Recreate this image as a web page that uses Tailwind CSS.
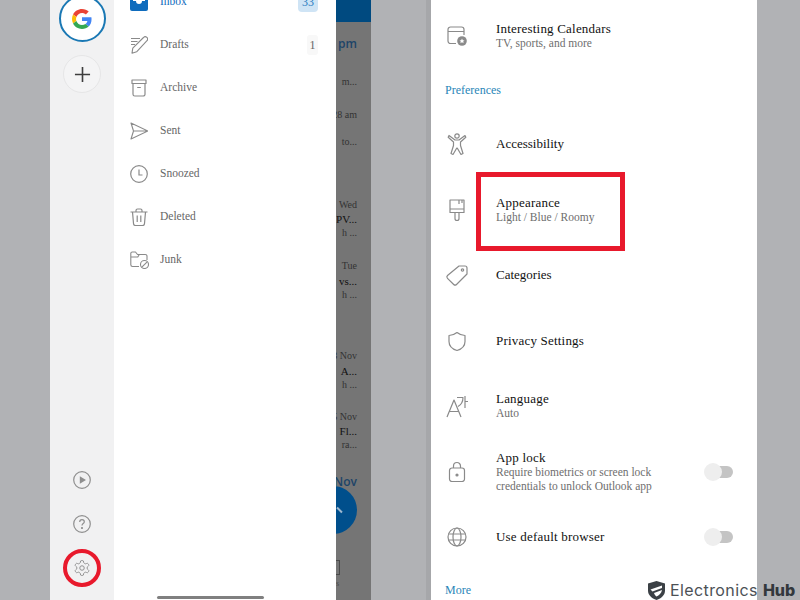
<!DOCTYPE html>
<html lang="en">
<head>
  <meta charset="UTF-8" />
  <meta name="viewport" content="width=device-width, initial-scale=1.0"/>
  <title>Outlook settings</title>
  <script src="https://cdn.jsdelivr.net/npm/@tailwindcss/browser@4"></script>
</head>
<body class="bg-[#b1b2b5] font-['Liberation_Serif',serif] overflow-hidden">
<div class="relative flex w-[800px] h-[600px] overflow-hidden">

  <!-- Left phone -->
  <div class="ml-[50px] flex w-[321px] h-[600px]">

    <!-- Account rail -->
    <div class="w-[64px] h-full bg-[#f1f1f2] flex flex-col items-center justify-between">
      <div class="flex flex-col items-center gap-[13px] -mt-[5px]">
        <div class="w-[47px] h-[47px] rounded-full border-2 border-[#1a78b4] bg-white flex items-center justify-center">
          <svg width="20" height="20" viewBox="0 0 48 48">
            <path fill="#EA4335" d="M24 9.500c3.500 0 6.700 1.200 9.200 3.600l6.900-6.900C35.900 2.400 30.500 0 24 0 14.600 0 6.500 5.400 2.600 13.200l8 6.200C12.500 13.600 17.800 9.500 24 9.500z"/>
            <path fill="#4285F4" d="M46.900 24.500c0-1.600-.1-3.100-.4-4.500H24v9h12.900c-.6 3-2.300 5.500-4.800 7.200l7.700 6c4.500-4.200 7.100-10.300 7.100-17.700z"/>
            <path fill="#FBBC05" d="M10.500 28.600c-.5-1.400-.8-3-.8-4.600s.3-3.200.8-4.600l-8-6.200C.9 16.400 0 20.100 0 24s.9 7.600 2.600 10.800l7.900-6.200z"/>
            <path fill="#34A853" d="M24 48c6.500 0 11.900-2.100 15.900-5.800l-7.700-6c-2.200 1.400-4.900 2.300-8.200 2.300-6.200 0-11.500-4.200-13.400-9.800l-8 6.200C6.500 42.600 14.600 48 24 48z"/>
          </svg>
        </div>
        <div class="w-[38px] h-[38px] rounded-full bg-[#f4f4f5] border border-[#e6e6e7] flex items-center justify-center">
          <svg width="17" height="17" viewBox="0 0 18 18" fill="none" stroke="#3d3d3d" stroke-width="1.700"><path d="M9 1v16M1 9h16"/></svg>
        </div>
      </div>
      <div class="flex flex-col items-center gap-[26px] pb-[23px]">
        <svg width="18" height="18" viewBox="0 0 18 18" fill="none" stroke="#8f8f8f" stroke-width="1.200"><circle cx="9" cy="9" r="8.300"/><path d="M6.800 5.200v7.600L13 9z" fill="#8f8f8f" stroke="none"/></svg>
        <svg width="18" height="18" viewBox="0 0 18 18" fill="none" stroke="#8f8f8f" stroke-width="1.200"><circle cx="9" cy="9" r="8.300"/><path d="M6.700 7c0-1.500 1-2.400 2.300-2.400s2.300.9 2.300 2.100c0 1.800-2.300 1.800-2.300 3.700"/><circle cx="9" cy="13" r=".5" fill="#8f8f8f"/></svg>
        <div class="relative flex items-center justify-center w-[18px] h-[18px]">
          <svg width="20" height="20" viewBox="0 0 24 24" fill="none" stroke="#8f8f8f" stroke-width="1.300" stroke-linejoin="round"><path d="M12.220 2h-.44a2 2 0 0 0-2 2v.18a2 2 0 0 1-1 1.730l-.43.250a2 2 0 0 1-2 0l-.15-.08a2 2 0 0 0-2.730.730l-.22.380a2 2 0 0 0 .73 2.730l.15.100a2 2 0 0 1 1 1.720v.510a2 2 0 0 1-1 1.740l-.15.090a2 2 0 0 0-.73 2.730l.22.380a2 2 0 0 0 2.730.730l.15-.08a2 2 0 0 1 2 0l.43.250a2 2 0 0 1 1 1.730V20a2 2 0 0 0 2 2h.44a2 2 0 0 0 2-2v-.18a2 2 0 0 1 1-1.730l.43-.25a2 2 0 0 1 2 0l.15.080a2 2 0 0 0 2.730-.73l.22-.39a2 2 0 0 0-.73-2.730l-.15-.08a2 2 0 0 1-1-1.740v-.5a2 2 0 0 1 1-1.740l.15-.09a2 2 0 0 0 .73-2.730l-.22-.38a2 2 0 0 0-2.730-.73l-.15.080a2 2 0 0 1-2 0l-.43-.25a2 2 0 0 1-1-1.730V4a2 2 0 0 0-2-2z"/><circle cx="12" cy="12" r="3"/></svg>
          <div class="absolute -left-[10px] -top-[10px] w-[38px] h-[38px] rounded-full border-4 border-[#e8192c]"></div>
        </div>
      </div>
    </div>

    <!-- Folder drawer -->
    <div class="relative z-10 w-[222px] h-full bg-white">
      <div class="-mt-[20px] text-[11.500px] text-[#666]">
        <div class="h-[43px] flex items-center pl-[16px] pr-[18px]">
          <svg class="mr-[12px]" width="18" height="18" viewBox="0 0 18 18"><path d="M2 1h14a2 2 0 0 1 2 2v13a2 2 0 0 1-2 2H2a2 2 0 0 1-2-2V3a2 2 0 0 1 2-2z" fill="#0f6cbd"/><path d="M3 3h12v5h-3a3 3 0 0 1-6 0H3z" fill="#fff"/></svg>
          <span class="text-[#0f6cbd]">Inbox</span>
          <span class="ml-auto w-[20px] h-[20px] rounded-[4px] bg-[#cfe4f5] text-[#2a7cc0] flex items-center justify-center text-[12px]">33</span>
        </div>
        <div class="h-[43px] flex items-center pl-[16px] pr-[18px]">
          <svg class="mr-[12px]" width="18" height="18" viewBox="0 0 18 18" fill="none" stroke="#8a8a8a" stroke-width="1.100" stroke-linejoin="round"><path d="M1 2.500h9M1 5.500h6.500M1 8.500h4M2 17.200l.8-5L13.500 1.500a1.700 1.700 0 0 1 3.500 3.200L6.600 15.800z"/></svg>
          <span>Drafts</span>
          <span class="ml-auto w-[11px] h-[20px] rounded-[3px] bg-[#f8f8f8] flex items-center justify-center text-[12px]">1</span>
        </div>
        <div class="h-[43px] flex items-center pl-[16px] pr-[18px]">
          <svg class="mr-[12px]" width="18" height="18" viewBox="0 0 18 18" fill="none" stroke="#8a8a8a" stroke-width="1.200" stroke-linejoin="round"><path d="M2 1h14v3.500H2zM3 4.500v10.700A1.800 1.800 0 0 0 4.800 17h8.400a1.800 1.800 0 0 0 1.800-1.800V4.500M7.200 8.500h3.600"/></svg>
          <span>Archive</span>
        </div>
        <div class="h-[43px] flex items-center pl-[16px] pr-[18px]">
          <svg class="mr-[12px]" width="18" height="18" viewBox="0 0 18 18" fill="none" stroke="#8a8a8a" stroke-width="1.100" stroke-linejoin="round"><path d="M1 1l17 8L1 17l2.500-8zM3.500 9H18"/></svg>
          <span>Sent</span>
        </div>
        <div class="h-[43px] flex items-center pl-[16px] pr-[18px]">
          <svg class="mr-[12px]" width="18" height="18" viewBox="0 0 18 18" fill="none" stroke="#8a8a8a" stroke-width="1.200"><circle cx="9" cy="9" r="8.300"/><path d="M9 4.500V10h3.500"/></svg>
          <span>Snoozed</span>
        </div>
        <div class="h-[43px] flex items-center pl-[16px] pr-[18px]">
          <svg class="mr-[12px]" width="18" height="18" viewBox="0 0 18 18" fill="none" stroke="#8a8a8a" stroke-width="1.200" stroke-linejoin="round"><path d="M.5 4h17M6 4V2.500A1.500 1.500 0 0 1 7.500 1h3A1.500 1.500 0 0 1 12 2.500V4M2.500 4l1 11.500A2 2 0 0 0 5.500 17.500h7a2 2 0 0 0 2-2L15.500 4M7.200 7.500v6.500M10.800 7.500v6.500"/></svg>
          <span>Deleted</span>
        </div>
        <div class="h-[43px] flex items-center pl-[16px] pr-[18px]">
          <svg class="mr-[12px]" width="19" height="18" viewBox="0 0 19 18" fill="none" stroke="#8a8a8a" stroke-width="1.100" stroke-linejoin="round"><path d="M9 15.500H2.500A1.700 1.700 0 0 1 .8 13.800V2.500A1.500 1.500 0 0 1 2.300 1h3.200l2 2.500h7.800A1.700 1.700 0 0 1 17 5.200V9M.8 6h7l1.500-2.500"/><circle cx="14.500" cy="13.500" r="4"/><path d="M11.800 16.200l5.400-5.400"/></svg>
          <span class="-ml-px">Junk</span>
        </div>
      </div>
      <div class="absolute left-[43px] bottom-[1px] w-[107px] h-[3px] rounded-full bg-[#808080]"></div>
    </div>

    <!-- Dimmed mail list behind the drawer -->
    <div class="relative w-[35px] h-full bg-[#757575] overflow-hidden">
      <div class="h-[22px] bg-[#004a80]"></div>
      <div class="flex flex-col items-end pr-[14px] text-[10px] leading-[14px] text-[#333] whitespace-nowrap">
        <div class="mt-[15px] h-[14px] font-['Open_Sans',sans-serif] text-[12px] font-semibold text-[#1d4468]">pm</div>
        <div class="mt-[24px] h-[14px]">m...</div>
        <div class="mt-[19px] h-[14px]">28 am</div>
        <div class="mt-[13px] h-[14px]">to...</div>
        <div class="mt-[49px] h-[14px]">Wed</div>
        <div class="h-[14px] text-[11px] text-[#111]">PV...</div>
        <div class="h-[14px]">h ...</div>
        <div class="mt-[19px] h-[14px]">Tue</div>
        <div class="mt-px h-[14px] text-[11px] text-[#111]">vs...</div>
        <div class="h-[14px]">h ...</div>
        <div class="mt-[47px] h-[14px]">3 Nov</div>
        <div class="mt-px h-[14px] text-[11px] text-[#111]">A...</div>
        <div class="h-[14px]">h ...</div>
        <div class="mt-[18px] h-[14px]">5 Nov</div>
        <div class="h-[14px] text-[11px] text-[#111]">Fl...</div>
        <div class="h-[14px]">ra...</div>
        <div class="mt-[23px] h-[14px] font-['Open_Sans',sans-serif] text-[12px] font-semibold text-[#1d4468]">Nov</div>
      </div>
      <div class="absolute left-[-27px] top-[486px] w-[48px] h-[48px] rounded-full bg-[#004f8c]"></div>
      <div class="absolute left-0 top-[509px] w-[7px] h-[2px] rotate-45 bg-[#9db8cf]"></div>
      <div class="absolute left-0 top-[560px] w-[4px] h-[15px] border border-l-0 border-[#4a4a4a]"></div>
      <div class="absolute left-0 top-[579px] text-[8px] leading-[10px] text-[#4a4a4a]">s</div>
    </div>
  </div>

  <!-- Right phone: settings list -->
  <div class="ml-[55px] w-[5px] h-full bg-[#a6a7aa]"></div>
  <div class="w-[326px] h-[600px] bg-white text-[13px] leading-[14px] text-[#111]">
    <div class="mt-[3.500px] h-[65px] flex items-center pl-[14px]">
      <svg class="mr-[27px]" width="24" height="24" viewBox="0 0 24 24" fill="none" stroke="#8a8a8a" stroke-width="1.200"><path d="M11 19.500H5.500A2.500 2.500 0 0 1 3 17V5.500A2.500 2.500 0 0 1 5.500 3h11A2.500 2.500 0 0 1 19 5.500V11M3 7.500h16"/><circle cx="17" cy="17" r="4.800" fill="#8a8a8a" stroke="none"/><path d="M17 14.500l.8 1.700 1.700.2-1.300 1.100.4 1.700-1.600-.9-1.600.9.4-1.700-1.300-1.100 1.700-.2z" fill="#fff" stroke="none"/></svg>
      <div>
        <div class="tracking-[0.2px]">Interesting Calendars</div>
        <div class="text-[11.500px] text-[#6e6e6e]">TV, sports, and more</div>
      </div>
    </div>
    <div class="h-[43px] flex items-center pl-[14px] text-[12px] text-[#2a86b8]">Preferences</div>
    <div class="h-[65.500px] flex items-center pl-[14px]">
      <svg class="mr-[27px]" width="24" height="24" viewBox="0 0 24 24" fill="none" stroke="#8a8a8a" stroke-width="1.200" stroke-linejoin="round"><circle cx="12" cy="4" r="2.200"/><path d="M4 3.500l-.8 1.700L8.500 10v3.500L6 21.500l2 1 3.800-6.500h.4l3.800 6.500 2-1-2.500-8V10l5.300-4.800-.8-1.700L14 8h-4z"/></svg>
      <div>Accessibility</div>
    </div>
    <div class="h-[65.500px] flex items-center pl-[14px]">
      <svg class="mr-[27px]" width="24" height="24" viewBox="0 0 24 24" fill="none" stroke="#8a8a8a" stroke-width="1.200" stroke-linejoin="round"><path d="M5 2h14v12.500H5zM5 11h14M14 2v4M17 2v3M10 14.500v6a2 2 0 0 0 4 0v-6"/></svg>
      <div>
        <div class="tracking-[0.2px]">Appearance</div>
        <div class="text-[11.500px] text-[#6e6e6e]">Light / Blue / Roomy</div>
      </div>
    </div>
    <div class="h-[65.500px] flex items-center pl-[14px]">
      <svg class="mr-[27px]" width="24" height="24" viewBox="0 0 24 24" fill="none" stroke="#8a8a8a" stroke-width="1.200" stroke-linejoin="round"><path d="M14 3h6a2 2 0 0 1 2 2v6L11.500 21.500a2 2 0 0 1-2.800 0l-6.200-6.200a2 2 0 0 1 0-2.800z"/><circle cx="17.500" cy="7" r="1.200"/></svg>
      <div>Categories</div>
    </div>
    <div class="h-[65.500px] flex items-center pl-[14px]">
      <svg class="mr-[27px]" width="24" height="24" viewBox="0 0 24 24" fill="none" stroke="#8a8a8a" stroke-width="1.200" stroke-linejoin="round"><path d="M12 3.500c2.500 2 5 3 8 3v6c0 4.500-3 7.500-8 9-5-1.500-8-4.500-8-9v-6c3 0 5.500-1 8-3z"/></svg>
      <div class="tracking-[0.2px]">Privacy Settings</div>
    </div>
    <div class="h-[65.500px] flex items-center pl-[14px]">
      <svg class="mr-[27px]" width="24" height="24" viewBox="0 0 24 24" fill="none" stroke="#8a8a8a" stroke-width="1.200" stroke-linejoin="round"><path d="M2 23L9 6l7 17M4.500 17.500h9M12 3.500h6c0 4-1.500 7-5 9M20 2v12M20 7.500h3"/></svg>
      <div>
        <div class="tracking-[0.2px]">Language</div>
        <div class="text-[11.500px] text-[#6e6e6e]">Auto</div>
      </div>
    </div>
    <div class="h-[65.500px] flex items-center pl-[14px] pr-[24px]">
      <svg class="mr-[27px]" width="24" height="24" viewBox="0 0 24 24" fill="none" stroke="#8a8a8a" stroke-width="1.200" stroke-linejoin="round"><path d="M7 8h10a2.500 2.500 0 0 1 2.500 2.500v8.500a2.500 2.500 0 0 1-2.500 2.500H7A2.500 2.500 0 0 1 4.500 19v-8.500A2.500 2.500 0 0 1 7 8zM8.500 8V6a3.500 3.500 0 0 1 7 0v2"/><circle cx="12" cy="15" r="1" fill="#8a8a8a"/></svg>
      <div>
        <div class="tracking-[0.2px]">App lock</div>
        <div class="text-[11.500px] text-[#6e6e6e]">Require biometrics or screen lock</div>
        <div class="text-[11.500px] text-[#6e6e6e]">credentials to unlock Outlook app</div>
      </div>
      <div class="relative ml-auto w-[25px] h-[12px] rounded-full bg-[#c4c4c4]">
        <div class="absolute -left-[4px] -top-[3px] w-[18px] h-[18px] rounded-full bg-[#eeeeee]"></div>
      </div>
    </div>
    <div class="h-[65.500px] flex items-center pl-[14px] pr-[24px]">
      <svg class="mr-[27px]" width="24" height="24" viewBox="0 0 24 24" fill="none" stroke="#8a8a8a" stroke-width="1.200"><circle cx="12" cy="12" r="9"/><ellipse cx="12" cy="12" rx="4" ry="9"/><path d="M3.500 9h17M3.500 15h17"/></svg>
      <div class="tracking-[0.2px]">Use default browser</div>
      <div class="relative ml-auto w-[25px] h-[12px] rounded-full bg-[#c4c4c4]">
        <div class="absolute -left-[4px] -top-[3px] w-[18px] h-[18px] rounded-full bg-[#eeeeee]"></div>
      </div>
    </div>
    <div class="pl-[14px] mt-[13px] text-[12px] text-[#2a86b8]">More</div>
  </div>

  <!-- Red highlight around Appearance -->
  <div class="absolute left-[476px] top-[172px] w-[149px] h-[79px] border-[5px] border-[#e8192c]"></div>

  <!-- Watermark -->
  <div class="absolute left-[648px] top-[581px] flex items-center font-['Inter',sans-serif] text-[16px] leading-[19px]">
    <svg class="mr-[5px]" width="17" height="19" viewBox="0 0 17 19"><path d="M8.500 0L17 2.500v7c0 4.500-3.500 7.800-8.500 9.500C3.500 17.300 0 14 0 9.500v-7z" fill="#3b4045"/><path d="M2.500 8.500L14 4.500v2.500L4.500 10.500zM6 12l8-3c-.5 3-3 5.500-5.500 6.500-1-.7-2-1.800-2.500-3.500z" fill="#fff"/></svg>
    <span class="text-[#4c5156] tracking-[0.4px]">Electronics</span>
    <span class="ml-[5px] font-extrabold text-[#33383d]">Hub</span>
  </div>
</div>
</body>
</html>
